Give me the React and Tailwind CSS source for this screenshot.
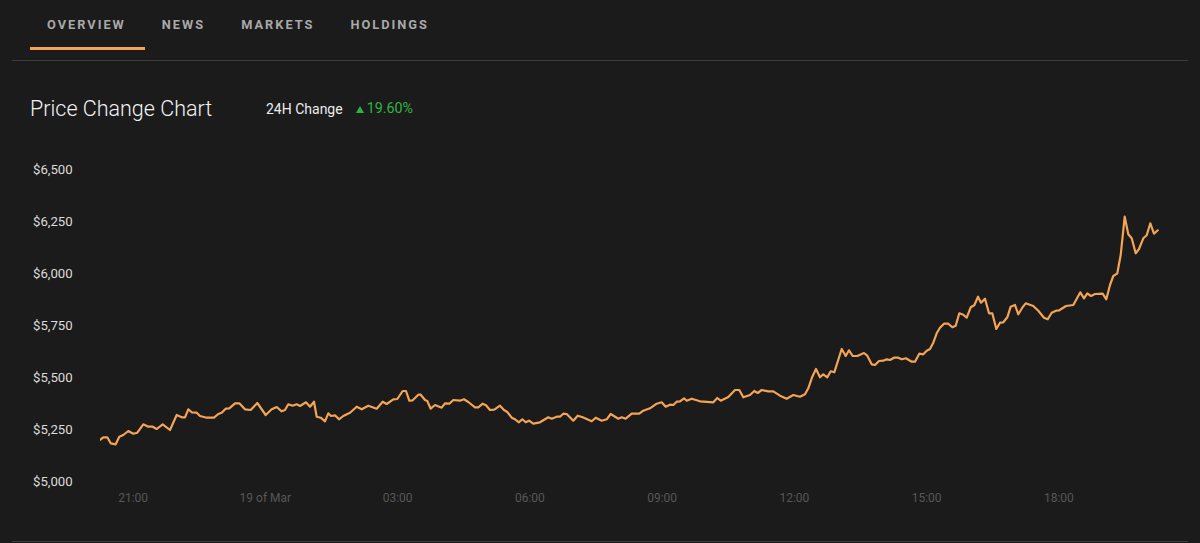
const font = { fontFamily: "Roboto, sans-serif" };

// traced from the chart, in screen px
const left = [[300,240],[310,232],[322,232],[332,250],[347,253],[358,230],[370,225],[385,213],[400,221],[412,218],[430,193],[445,200],[458,200],[470,207],[488,193],[510,210],[530,165],[545,172],[555,172],[565,148],[575,157],[590,158],[600,168],[620,173],[642,173],[655,162],[665,158],[677,146],[688,145],[705,130],[718,130],[735,148],[752,150],[772,129],[797,165],[815,148],[830,141],[845,154],[855,150],[865,133],[878,137],[890,133],[900,138],[918,127],[930,140],[942,125],[950,170],[962,173],[975,184],[985,160],[993,168],[1005,166],[1017,178],[1030,168],[1050,158],[1070,140],[1085,148],[1105,137],[1130,146],[1148,125],[1160,132],[1180,118],[1192,117]];
const middle = [[0,105],[8,93],[18,93],[28,122],[38,121],[55,104],[62,104],[75,120],[82,123],[92,146],[105,135],[125,143],[135,130],[148,131],[160,120],[180,122],[192,118],[205,126],[225,142],[235,142],[248,131],[258,136],[270,150],[283,149],[300,137],[312,150],[322,156],[335,173],[345,178],[357,187],[367,178],[377,187],[387,182],[400,191],[420,187],[445,172],[455,176],[470,170],[480,170],[490,161],[500,162],[520,182],[533,167],[548,172],[575,184],[587,173],[605,182],[620,178],[632,162],[655,176],[665,172],[677,176],[695,161],[718,161],[730,152],[750,145],[770,131],[785,127],[797,140],[810,134],[820,135],[830,125],[840,124],[852,115],[860,122],[875,116],[900,124],[940,127],[952,114],[962,122],[985,111],[1005,90],[1018,90],[1030,112],[1050,105],[1063,93],[1073,99],[1085,90],[1105,94],[1120,94],[1140,107],[1160,116],[1180,105]];
const right = [[60,590],[75,583],[85,565],[97,530],[108,507],[120,532],[130,523],[142,532],[152,514],[163,517],[185,447],[197,468],[207,451],[218,468],[232,468],[252,459],[262,467],[275,493],[285,495],[297,483],[310,482],[320,478],[330,480],[342,473],[355,473],[365,478],[378,475],[395,485],[405,485],[418,461],[430,463],[440,452],[450,447],[460,428],[470,400],[480,383],[492,371],[505,371],[517,382],[527,377],[538,340],[550,344],[560,353],[572,322],[583,316],[594,290],[603,308],[615,296],[627,340],[637,340],[649,387],[660,368],[670,367],[682,352],[692,320],[705,315],[715,343],[727,323],[737,310],[760,318],[775,332],[792,353],[803,358],[815,338],[828,332],[838,331],[858,318],[880,315],[901,277],[912,295],[922,280],[933,288],[945,282],[968,281],[979,298],[990,255],[1000,228],[1012,220],[1022,165],[1034,50],[1045,103],[1055,115],[1067,160],[1077,147],[1090,115],[1100,106],[1111,70],[1122,101],[1133,91]];

const points = [
  ...left.map(([x, y]) => [x / 3, 360 + y / 3]),
  ...middle.map(([x, y]) => [400 + x / 3, 360 + y / 3]),
  ...right.map(([x, y]) => [780 + x / 3, 200 + y / 3]),
]
  .map(([x, y]) => `${x.toFixed(1)},${y.toFixed(1)}`)
  .join(" ");

const tabs = ["OVERVIEW", "NEWS", "MARKETS", "HOLDINGS"];
const prices = ["$6,500", "$6,250", "$6,000", "$5,750", "$5,500", "$5,250", "$5,000"];
const times = ["21:00", "19 of Mar", "03:00", "06:00", "09:00", "12:00", "15:00", "18:00"];

export default function App() {
  return (
    <div className="w-[1200px] h-[543px] overflow-hidden bg-[#1b1b1b] pt-px" style={font}>
      <div className="mx-3 h-[541px] border-b border-[#3a3a3a]">
        <nav className="flex h-[60px] items-stretch border-b border-[#3d3d3d] pl-[18px] pb-[10px]">
          {tabs.map((tab, i) => (
            <div
              key={tab}
              className={
                "flex items-center pl-[17px] pr-[19px] pt-[2px] text-[12.8px] font-bold tracking-[2px] text-[#a9a9a9] border-b-[3px] " +
                (i === 0 ? "border-[#f4a455]" : "border-transparent")
              }
            >
              {tab}
            </div>
          ))}
        </nav>

        <div className="flex items-center pl-[18px] pt-[34px]">
          <h2 className="w-[236px] text-[21.5px] font-light leading-[28px] text-[#f2f2f2]">Price Change Chart</h2>
          <span className="text-[14px] text-[#ececec]">24H Change</span>
          <span className="ml-[13px] flex items-center gap-[3px] text-[14.3px] text-[#2fb344]">
            <span className="h-0 w-0 border-x-[4px] border-b-[7px] border-x-transparent border-b-[#2fb344]" />
            19.60%
          </span>
        </div>

        <div className="flex pt-[37px]">
          <div className="mt-[2px] flex h-[327px] w-[88px] flex-col justify-between pl-[21px] text-[13.2px] leading-[15px] text-[#dcdcdc]">
            {prices.map((p) => (
              <div key={p}>{p}</div>
            ))}
          </div>
          <svg viewBox="100 160 1060 330" className="h-[330px] w-[1060px] shrink-0">
            <polyline points={points} fill="none" stroke="#f4a455" strokeWidth="2.2" strokeLinejoin="round" strokeLinecap="round" />
          </svg>
        </div>

        <div className="ml-[55px] grid w-[1058px] grid-cols-8 text-center text-xs text-[#575757]">
          {times.map((t) => (
            <div key={t}>{t}</div>
          ))}
        </div>
      </div>
    </div>
  );
}
